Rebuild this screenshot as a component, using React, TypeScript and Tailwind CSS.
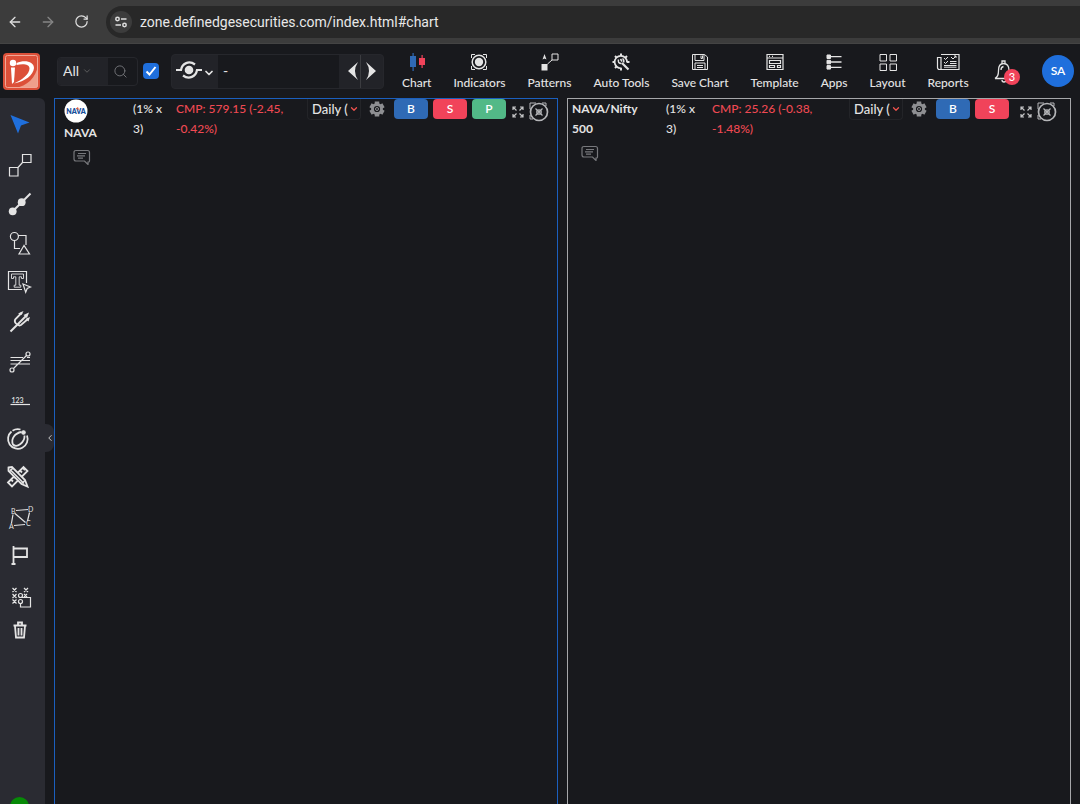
import type { ReactNode } from "react"
import { ArrowLeft, ArrowRight, ChevronDown, ChevronLeft, RotateCw, Search } from "lucide-react"

interface Chart {
  name: string
  price: string
  logo?: boolean
  active?: boolean
  actions: string[]
}

const charts: Chart[] = [
  { name: "NAVA", price: "CMP: 579.15 (-2.45, -0.42%)", logo: true, active: true, actions: ["B", "S", "P"] },
  { name: "NAVA/Nifty 500", price: "CMP: 25.26 (-0.38, -1.48%)", actions: ["B", "S"] },
]

const actionColors: Record<string, string> = {
  B: "bg-[#2f6ab5]",
  S: "bg-[#f1435a]",
  P: "bg-[#52b987]",
}

const tools: { label: string; icon: ReactNode }[] = [
  {
    label: "Cursor",
    icon: <path d="M10.5 9 29.5 16.5 21 19.5 18 27.5Z" fill="#1f6fdc" stroke="none" />,
  },
  {
    label: "Trend line",
    icon: <path d="M22.5 9.5h8.5v8h-8.5zM9.5 22.5H18V31H9.5zM18 22.5l4.5-5" />,
  },
  {
    label: "Brush",
    icon: (
      <>
        <path d="M12.5 27.5 30.5 9.5" strokeWidth="2" />
        <circle cx="12.7" cy="27.3" r="3.9" fill="#e4e4e4" stroke="none" />
        <circle cx="21.7" cy="18.2" r="3.9" fill="#e4e4e4" stroke="none" />
      </>
    ),
  },
  {
    label: "Shapes",
    icon: <path d="M18.4 13.5a4 4 0 1 1-8 0a4 4 0 1 1 8 0M18.5 12.5H26V22M14.5 17.5v8H20M24 22.5 19 31h10.5z" />,
  },
  {
    label: "Text",
    icon: (
      <>
        <path d="M22 27.5H8.5V9.5h18V21" />
        <path d="M11.5 12h12v4.5h-2V14.8h-2.3v8.4h1.6v2h-6.6v-2h1.6v-8.4h-2.3v1.7h-2z" strokeWidth="0.9" />
        <path d="m23 22 7.5 3-3.3 1.5-1.5 3.8z" />
      </>
    ),
  },
  {
    label: "Pitchfork",
    icon: (
      <>
        <path d="M10.5 30.5 26 15" strokeWidth="2" />
        <path d="M22 11.5 15.5 18q-1.5 2 0 4t4 2.5L21 24l7.5-6.5" strokeWidth="1.8" />
        <path d="m18 12.5 5.5-2.5-2 4zM23.5 14l5.5-2.5L27 17zM25.5 18l4.5-2-1.5 4.5z" fill="#e4e4e4" stroke="none" />
      </>
    ),
  },
  {
    label: "Fibonacci",
    icon: (
      <>
        <path d="M10.5 17.5H23M27 17.5h3M10.5 20.5h19.5M10.5 24H30M13.5 28.5 26.5 15.5" />
        <circle cx="12" cy="30" r="2" />
        <circle cx="28" cy="14" r="2" />
      </>
    ),
  },
  {
    label: "Numbering",
    icon: (
      <>
        <text x="11.5" y="24" fontSize="7" fontWeight="600" fill="#e4e4e4" stroke="none">123</text>
        <path d="M10.5 25.5H30" />
      </>
    ),
  },
  {
    label: "Gann circle",
    icon: (
      <>
        <path d="M11.5 13.5a9.8 9.8 0 1 0 15.5 4M12.5 12.7a9.8 9.8 0 0 1 8-1.2" strokeWidth="1.8" />
        <path d="M21.5 14C15 15 10.5 21 13 26.5 17 30.5 25 24 24.5 17.5" strokeWidth="1.8" />
        <circle cx="23.5" cy="14.5" r="1.7" fill="#e4e4e4" />
      </>
    ),
  },
  {
    label: "Drawing kit",
    icon: (
      <>
        <path d="m8 25.5 15.5-15.5 4 4L12 29.5zM11 22.5l2 2M14 19.5l2 2M20 13.5l2 2M23 11l2 2" strokeWidth="1.8" />
        <path d="M8.5 10.5 12 10l13 13 2.5 6.5-6-2.5-13-13z" fill="#2a2b32" strokeWidth="1.8" />
        <path d="m10 12.5 14 14M13 11l-3.5 3.5M21.5 26.5l3.5-3" strokeWidth="1.6" />
      </>
    ),
  },
  {
    label: "Patterns",
    icon: (
      <>
        <path d="M16 14.5 28 13.5M29.5 16.5 27.5 25M15 17.5 25.5 26.5M13 18.5 11.5 27M14 29.5l11-1" />
        <g fill="#e4e4e4" stroke="none" fontSize="7">
          <text x="11" y="17.5">B</text>
          <text x="28" y="16">D</text>
          <text x="26" y="30">C</text>
          <text x="9" y="33">A</text>
        </g>
      </>
    ),
  },
  {
    label: "Flag",
    icon: <path d="M13.5 11v18M11.5 29h4M13.5 13.5H27V22H13.5" strokeWidth="1.8" />,
  },
  {
    label: "Point and figure",
    icon: (
      <>
        <path d="m12.5 14 4 4m0-4-4 4M24 14l4 4m0-4-4 4M12.5 20l4 4m0-4-4 4M12.5 25.5l4 4m0-4-4 4M22 23.5h8.5v9.5h-10V30M24 20l3 3m0-3-3 3" />
        <circle cx="20.5" cy="21.5" r="2" />
        <circle cx="20.5" cy="27.5" r="2" />
      </>
    ),
  },
  {
    label: "Delete",
    icon: <path d="M13.5 12.5h13M18 12V9.5h4V12M15 13l1 11.5h8L25 13M18.5 15v7.5M21.5 15v7.5" strokeWidth="1.8" />,
  },
]

const menu: { label: string; icon: ReactNode }[] = [
  {
    label: "Chart",
    icon: (
      <>
        <path d="M3 3h6v11H3zM5.5 0h1.2v18H5.5z" fill="#2f6ab5" stroke="none" />
        <path d="M12 5h6v7h-6zM14.5 2h1.2v13h-1.2z" fill="#f1435a" stroke="none" />
      </>
    ),
  },
  {
    label: "Indicators",
    icon: (
      <>
        <circle cx="10" cy="9" r="6.8" strokeWidth="1.5" />
        <circle cx="10" cy="9" r="4.2" fill="#e4e4e4" stroke="none" />
        <path d="M2.5 5V1.5H6M14 1.5h3.5V5M2.5 13v3.5H6M14 16.5h3.5V13" />
      </>
    ),
  },
  {
    label: "Patterns",
    icon: (
      <>
        <path d="M13 1h6v6h-6zM8.5 11 13 7" />
        <path d="M2.5 11h6v6.5h-6zM5.5 1l2 5.5-2-1-2 1z" fill="#e4e4e4" stroke="none" />
      </>
    ),
  },
  {
    label: "Auto Tools",
    icon: (
      <>
        <path d="M16 9.5a6.2 6.2 0 1 0-5.5 5.7" strokeWidth="1.7" />
        <path d="M10 .5v2.5M4 3l1.7 1.7M1.500 9H4M4 15l1.700-1.700M10 17.500V15M16 3l-1.700 1.700M18.500 9H16" strokeWidth="2" />
        <path d="m11 10 6.500 6.500" strokeWidth="2.2" />
        <path d="M7.500 6.500q-1 4 3 4M9.500 6l1.500 2.500M11.500 5.500q2 1.500 1 4" strokeWidth="1.5" />
      </>
    ),
  },
  {
    label: "Save Chart",
    icon: <path d="M2.5 1.5h12L17.5 4v12.5h-15zM5 1.5v6h9v-6M11 2.5v3h1.5v-3M5 16.5V10h10v6.5M7 12.5h6M7 14.5h6" />,
  },
  {
    label: "Template",
    icon: <path d="M2 1.5h16v15H2zM2 5h16M4 3.3h1M7 3.3h1M4.5 7.5h11v3h-11zM4.5 12.5h5v2h-5zM12.5 12.5h3v2h-3z" strokeWidth="1.2" />,
  },
  {
    label: "Apps",
    icon: (
      <>
        <path d="M3 2h3.5v3.5H3zM3 7.3h3.5v3.5H3zM3 12.6h3.5v3.5H3z" fill="#e4e4e4" />
        <path d="M7 3.7h10.5M7 9h10.5M7 14.4h10.5" strokeWidth="1.3" />
      </>
    ),
  },
  {
    label: "Layout",
    icon: <path d="M2 1.5h6.5V8H2zM12 1.5h6.5V8H12zM2 11h6.5v6.5H2zM12 11h6.5v6.5H12z" />,
  },
  {
    label: "Reports",
    icon: (
      <>
        <path d="M3 1.5h18v15H1.5c-1.5 0-2-1-2-2V4.5H3V16" strokeWidth="1.2" />
        <path d="m6 5 1.5 1.5L10 4M6 9l1.5 1.5L10 8M13 4l2 2 3-3M18 5V3h-2M12 8.5h6.5M12 10.5h6.5M6 12.5h12.5M6 14.2h12.5" />
      </>
    ),
  },
]

function BrowserBar() {
  return (
    <header className="flex h-11 items-center border-b border-[#444] bg-[#3c3c3c] text-[#dedede]">
      <button aria-label="Back" className="ml-[7px]">
        <ArrowLeft className="h-4 w-4" />
      </button>
      <button aria-label="Forward" className="ml-[17px] text-[#858585]">
        <ArrowRight className="h-4 w-4" />
      </button>
      <button aria-label="Reload" className="ml-[18px]">
        <RotateCw className="h-[15px] w-[15px]" />
      </button>
      <div className="ml-[17px] flex h-8 flex-1 items-center gap-2 rounded-l-full bg-[#282828] pl-1">
        <button aria-label="Site information" className="flex h-[22px] w-[22px] items-center justify-center rounded-full bg-[#3c3c3c]">
          <svg className="h-3 w-3" viewBox="0 0 12 12" fill="none" stroke="currentColor" strokeWidth="1.5">
            <circle cx="2.5" cy="3" r="1.7" />
            <circle cx="9.5" cy="9" r="1.7" />
            <path d="M6 3h5.5M.5 9H6" />
          </svg>
        </button>
        <input
          aria-label="Address"
          className="flex-1 bg-transparent font-[Roboto,sans-serif] text-sm text-[#e8e8e8] outline-none"
          defaultValue="zone.definedgesecurities.com/index.html#chart"
        />
      </div>
    </header>
  )
}

function Logo() {
  return (
    <svg className="h-[37px] w-[37px]" viewBox="0 0 37 37" role="img" aria-label="Definedge">
      <rect width="37" height="37" rx="4" fill="#dc5039" />
      <path d="M35 12v20a3 3 0 0 1-3 3H12c12-2 21-10 23-23" fill="#ee9f8b" />
      <rect x="2.5" y="2.5" width="32" height="32" rx="2" fill="none" stroke="#f0a797" />
      <circle cx="10" cy="10" r="3.2" fill="#fff" />
      <path d="M8 14.5h4L11 29l-2 2z" fill="#fff" />
      <path d="M13.5 10C21 6.5 31 8 31 15 30.5 22 22 28.5 11 30.5 19 27 26.5 21 26.5 15.5 26.5 11 20 10.5 13.5 12z" fill="#fff" />
    </svg>
  )
}

function Toolbar() {
  return (
    <nav className="flex h-[54px] items-center">
      <a href="#chart" className="ml-[3px] mr-[17px] shrink-0">
        <Logo />
      </a>
      <div className="flex h-[29px] shrink-0 overflow-hidden rounded border border-[#26272c]">
        <div className="relative flex w-[50px] items-center bg-[#222328]">
          <select aria-label="Segment" className="w-full appearance-none pl-[5px] text-sm outline-none">
            <option>All</option>
          </select>
          <ChevronDown className="pointer-events-none absolute right-4 h-[10px] w-[10px] text-[#666]" />
        </div>
        <button aria-label="Search" className="flex w-[29px] items-center justify-center pr-1 text-[#74757a]">
          <Search className="h-[15px] w-[15px]" strokeWidth={1.5} />
        </button>
      </div>
      <label className="relative ml-[5px] mr-3 flex shrink-0">
        <input type="checkbox" defaultChecked aria-label="Sync charts" className="h-4 w-4 appearance-none rounded-sm bg-[#1f6fdc]" />
        <svg className="pointer-events-none absolute inset-0 h-4 w-4" viewBox="0 0 16 16" fill="none" stroke="#fff" strokeWidth="2">
          <path d="m3.5 8.5 3 3L12.5 4" />
        </svg>
      </label>
      <div className="flex h-[35px] shrink-0 overflow-hidden rounded border border-[#26272c] bg-[#222328]">
        <button aria-label="Link colour" className="flex w-[46px] items-center justify-center">
          <svg className="h-5 w-7" viewBox="0 0 28 20" fill="none" stroke="#e4e4e4" strokeWidth="2.2">
            <circle cx="14" cy="9" r="4.3" fill="#e4e4e4" stroke="none" />
            <path d="M1 9h5C7 2.5 14-1 20 3.5M27 9h-5C21 15.5 14 19 8 14.5" />
          </svg>
          <ChevronDown className="mt-1 h-3 w-3" strokeWidth={3.5} />
        </button>
        <input aria-label="Watchlist" defaultValue="-" className="w-[121px] bg-[#18191d] px-[5px] text-sm outline-none" />
        <button aria-label="Previous" className="flex w-[22px] items-center justify-end border-r border-[#3b3c40] pr-px">
          <svg className="h-5 w-3" viewBox="0 0 12 20" fill="#e4e4e4">
            <path d="M11 1Q5 10 11 19L1 10z" />
          </svg>
        </button>
        <button aria-label="Next" className="flex w-[22px] items-center pl-1">
          <svg className="h-5 w-3" viewBox="0 0 12 20" fill="#e4e4e4">
            <path d="M1 1Q7 10 1 19L11 10z" />
          </svg>
        </button>
      </div>
      <div className="ml-[18px] mt-[2px] flex flex-1 gap-[22px]">
        {menu.map((item) => (
          <button key={item.label} className="flex flex-col items-center gap-[3px] whitespace-nowrap text-xs font-medium leading-[18px] text-[#e4e4e4]">
            <svg className="h-[18px] w-5 overflow-visible" viewBox="0 0 20 18" fill="none" stroke="#e4e4e4">
              {item.icon}
            </svg>
            {item.label}
          </button>
        ))}
      </div>
      <button aria-label="Notifications" className="relative mr-6 h-7 w-6 shrink-0">
        <svg className="h-6 w-5" viewBox="0 0 20 24" fill="none" stroke="#e4e4e4" strokeWidth="1.3">
          <path d="M1 19.5h17.5c-2.5-2-3.5-4-3.5-8C15 6.5 13 4.5 9.5 4.5S4.5 6.5 4.5 11.5 3.5 17.5 1 19.5M8 21a2 2 0 0 0 4 0M8 4.5V2h3v2.5M7 11q0-3 2.5-3.5" />
        </svg>
        <span className="absolute left-[10px] top-3 h-4 w-4 rounded-full bg-[#f1435a] text-center text-[11px] font-medium leading-4 text-white">3</span>
      </button>
      <button className="mr-[6px] h-8 w-8 shrink-0 rounded-full bg-[#1f6fdc] text-xs font-semibold text-white">SA</button>
    </nav>
  )
}

function Sidebar() {
  return (
    <aside className="relative w-[45px] shrink-0 overflow-hidden rounded-tr-md bg-[#2a2b32] pt-2">
      {tools.map((tool) => (
        <button key={tool.label} aria-label={tool.label} className="block">
          <svg className="h-[39px] w-[45px]" viewBox="0 0 45 39" fill="none" stroke="#e4e4e4" strokeWidth="1.2">
            {tool.icon}
          </svg>
        </button>
      ))}
      <span className="absolute -bottom-3 left-[10px] h-[19px] w-[19px] rounded-full bg-[#078a07]" />
    </aside>
  )
}

function ChartPanel({ chart }: { chart: Chart }) {
  return (
    <section className={`flex flex-1 flex-col border border-b-0 ${chart.active ? "border-[#1b5fbe]" : "border-[#a6a7aa]"}`}>
      <div className="flex text-xs font-medium leading-5">
        <div className={chart.logo ? "w-[78px] pl-[9px]" : "w-[98px] pl-1 pr-6"}>
          {chart.logo && (
            <svg className="block h-6 w-6" viewBox="0 0 24 24" role="img" aria-label="Nava logo">
              <circle cx="12" cy="12" r="11.5" fill="#fff" />
              <text x="12" y="14.5" textAnchor="middle" fontSize="7" fontWeight="800" fill="#164e9b">NAVA</text>
              <path d="m12 9.5 2-1.5 1 3z" fill="#e25b39" />
            </svg>
          )}
          <h2 className="font-bold">{chart.name}</h2>
          <button aria-label="Notes" className="ml-[9px] mt-[6px] block">
            <svg className="h-4 w-[18px]" viewBox="0 0 18 16" fill="none" stroke="#77787c" strokeWidth="1.2">
              <path d="M3 1.5h11.5q2 0 2 2V12q0 1-1 1H15v2.5L11.5 12H3q-2 0-2-2V3.5q0-2 2-2M5 4.5h8M4 6.8h8M5 9.2h5" />
            </svg>
          </button>
        </div>
        <p className={chart.logo ? "w-[43px] pr-2" : "w-[46px] pr-2"}>(1% x 3)</p>
        <p className="w-[112px] text-[#ef4953]">{chart.price}</p>
        <div className={`ml-auto flex h-5 items-center ${chart.logo ? "pr-2" : "pr-[13px]"}`}>
          <div className="relative flex h-[21px] w-[54px] items-center rounded-b border border-t-0 border-[#232428]">
            <select aria-label="Interval" className="w-full appearance-none pl-1 text-[13px] outline-none">
              <option>Daily (</option>
            </select>
            <ChevronDown className="pointer-events-none absolute right-px h-[10px] w-[10px] text-[#f0524d]" strokeWidth={3} />
          </div>
          <button aria-label="Settings" className="ml-2">
            <svg className="h-4 w-4" viewBox="0 0 16 16" fill="none" stroke="#8e8f92">
              <circle cx="8" cy="8" r="4.5" strokeWidth="2.8" />
              <path d="M8 .5v3M8 12.5v3M1.5 4.3l2.6 1.5M11.9 10.2l2.6 1.5M1.5 11.7l2.6-1.5M11.9 5.8l2.6-1.5" strokeWidth="4.5" />
              <circle cx="8" cy="8" r="1.5" />
            </svg>
          </button>
          <div className="ml-[9px] flex gap-[5px]">
            {chart.actions.map((action) => (
              <button key={action} className={`h-5 w-[34px] rounded text-xs font-semibold leading-5 text-white ${actionColors[action]}`}>
                {action}
              </button>
            ))}
          </div>
          <button aria-label="Expand" className={`mt-[5px] ${chart.logo ? "ml-[6px]" : "ml-[11px]"}`}>
            <svg className="h-3 w-3" viewBox="0 0 12 12" fill="none" stroke="#c4c4c6" strokeWidth="1.2">
              <path d="M4 1H1v3M1 1l3.5 3.5M8 1h3v3M11 1 7.5 4.5M1 8v3h3M1 11l3.5-3.5M11 8v3H8M11 11 7.5 7.5" />
            </svg>
          </button>
          <button aria-label="Clear indicators" className="ml-[5px] mt-[6px]">
            <svg className="h-5 w-5" viewBox="0 0 20 20" fill="none" stroke="#b4b5b8">
              <circle cx="10" cy="10" r="8.5" strokeWidth="1.7" />
              <path d="M1 7V1h6M13 1h4v3M1 13v4h3" />
              <circle cx="10" cy="10" r="2.2" strokeWidth="1.3" />
              <path d="m6.5 6.5 7 7M13.5 6.5l-7 7" strokeWidth="1.2" />
            </svg>
          </button>
        </div>
      </div>
    </section>
  )
}

export default function App() {
  return (
    <div className="flex min-h-screen flex-col bg-[#18191d] font-[Lato,sans-serif] text-[#e4e4e4]">
      <BrowserBar />
      <Toolbar />
      <main className="relative flex flex-1">
        <Sidebar />
        <button aria-label="Collapse tools" className="absolute left-[45px] top-[326px] flex h-7 w-[9px] items-center justify-center rounded-r-lg bg-[#2a2b32]">
          <ChevronLeft className="h-[10px] w-[10px] shrink-0" />
        </button>
        <div className="mx-[9px] flex flex-1 gap-[9px]">
          {charts.map((chart) => (
            <ChartPanel key={chart.name} chart={chart} />
          ))}
        </div>
      </main>
    </div>
  )
}
